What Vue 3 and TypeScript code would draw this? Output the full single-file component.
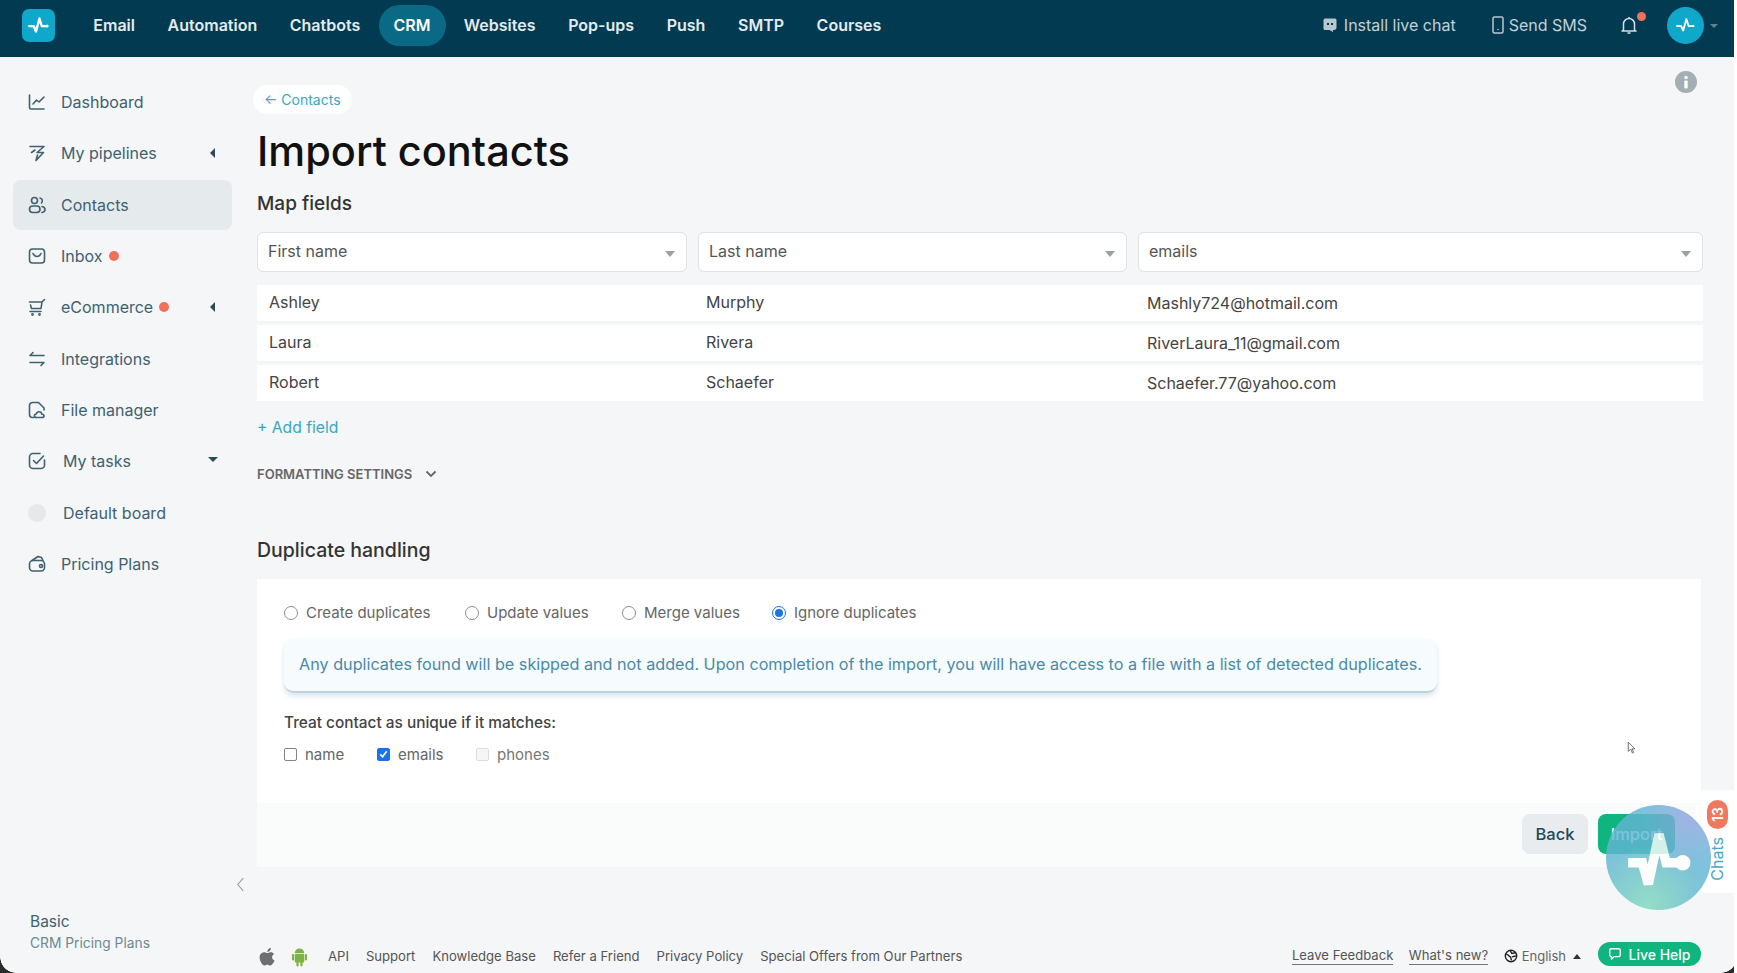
<script setup lang="ts">
interface SideItem { label: string; icon: string; dot?: boolean; caret?: 'left' | 'down'; active?: boolean; indent?: boolean }
const navs = ['Email', 'Automation', 'Chatbots', 'CRM', 'Websites', 'Pop-ups', 'Push', 'SMTP', 'Courses']
const side: SideItem[] = [
  { label: 'Dashboard', icon: 'dash' },
  { label: 'My pipelines', icon: 'pipe', caret: 'left' },
  { label: 'Contacts', icon: 'contacts', active: true },
  { label: 'Inbox', icon: 'inbox', dot: true },
  { label: 'eCommerce', icon: 'cart', dot: true, caret: 'left' },
  { label: 'Integrations', icon: 'swap' },
  { label: 'File manager', icon: 'file' },
  { label: 'My tasks', icon: 'tasks', caret: 'down', indent: true },
  { label: 'Default board', icon: 'circle', indent: true },
  { label: 'Pricing Plans', icon: 'wallet' }
]
const selects = [
  { label: 'First name', w: 430 },
  { label: 'Last name', w: 429 },
  { label: 'emails', w: 565 }
]
const rows = [
  ['Ashley', 'Murphy', 'Mashly724@hotmail.com'],
  ['Laura', 'Rivera', 'RiverLaura_11@gmail.com'],
  ['Robert', 'Schaefer', 'Schaefer.77@yahoo.com']
]
const radios = [
  { label: 'Create duplicates', on: false, w: 181 },
  { label: 'Update values', on: false, w: 157 },
  { label: 'Merge values', on: false, w: 150 },
  { label: 'Ignore duplicates', on: true, w: 160 }
]
const footLinks = ['API', 'Support', 'Knowledge Base', 'Refer a Friend', 'Privacy Policy', 'Special Offers from Our Partners']
</script>

<template>
  <div class="page">
    <header class="top">
      <div class="logo">
        <svg viewBox="0 0 24 24" width="26" height="26" fill="none" stroke="#fff" stroke-width="2.2" stroke-linejoin="round" stroke-linecap="round">
          <path d="M3 13h4l2.2 5L12.4 6l2.2 7h4" /><circle cx="19.5" cy="13" r="1.4" fill="#fff" stroke="none" />
        </svg>
      </div>
      <nav class="nav">
        <a v-for="n in navs" :key="n" class="nav-link" :class="{ on: n === 'CRM' }">{{ n }}</a>
      </nav>
      <div class="top-right">
        <span class="tool chat-tool">
          <svg viewBox="0 0 16 16" width="16" height="16"><path d="M3 1.500h10a1.500 1.500 0 0 1 1.500 1.500v7.500c0 1.500-1 2.500-2.500 2.500h-1v2L7.500 13H3a1.500 1.500 0 0 1-1.500-1.500V3A1.500 1.500 0 0 1 3 1.500z" fill="#b9c8cf" /><rect x="5" y="6" width="2" height="2" fill="#023a52" /><rect x="9" y="6" width="2" height="2" fill="#023a52" /></svg>
          Install live chat
        </span>
        <span class="tool sms-tool">
          <svg viewBox="0 0 12 18" width="12" height="18" fill="none" stroke="#b9c8cf" stroke-width="1.500"><rect x="1" y="1" width="10" height="16" rx="1.500" /><circle cx="6" cy="13.500" r=".8" fill="#b9c8cf" stroke="none" /></svg>
          Send SMS
        </span>
        <span class="bell">
          <svg viewBox="0 0 20 20" width="20" height="20" fill="none" stroke="#d5dee2" stroke-width="1.500" stroke-linejoin="round"><path d="M4.500 15V9a5.500 5.500 0 0 1 11 0v6l1.500 1H3z" /><path d="M8.500 18h3" /><path d="M10 3V2" /></svg>
          <i class="bell-dot"></i>
        </span>
        <span class="avatar">
          <svg viewBox="0 0 24 24" width="24" height="24" fill="none" stroke="#fff" stroke-width="1.800" stroke-linejoin="round" stroke-linecap="round"><path d="M3 13h4l2.200 4.500L12.400 6l2.200 7h5" /></svg>
        </span>
        <i class="avatar-caret"></i>
      </div>
    </header>

    <div class="body">
      <aside class="sidebar">
        <ul class="side-list">
          <li v-for="s in side" :key="s.label" class="side-item" :class="{ active: s.active, indent: s.indent }">
            <span class="side-icon">
              <svg v-if="s.icon !== 'circle'" viewBox="0 0 20 20" width="20" height="20" fill="none" stroke="#3f6171" stroke-width="1.600" stroke-linecap="round" stroke-linejoin="round">
                <path v-if="s.icon === 'dash'" d="M2.500 3v12.500a1.500 1.500 0 0 0 1.500 1.500h13M6 12l3.500-4 2.500 2 5-5" />
                <path v-else-if="s.icon === 'pipe'" d="M3 3.500h14L10 9.500h6.500L9 17.500l1.500-5.500M4.500 9.500 8 7" />
                <g v-else-if="s.icon === 'contacts'">
                  <circle cx="7.500" cy="5.500" r="3" /><path d="M13 3a3 3 0 0 1 1.500 5" /><rect x="2.500" y="11" width="10.500" height="6.500" rx="3.200" /><path d="M15 11.500c2 .3 3 1.600 3 3s-1 2.700-3 3" />
                </g>
                <g v-else-if="s.icon === 'inbox'">
                  <rect x="2.500" y="3" width="15" height="14" rx="3" /><path d="M6 7.500c1 2 2.500 3 4 3s3-1 4-3" />
                </g>
                <g v-else-if="s.icon === 'cart'">
                  <path d="M2.500 5h12.500l2.500-2.500M15 5l-1 6.500H4.500L3.500 8" /><path d="M3 14.500h11" /><circle cx="5.500" cy="17.500" r=".6" /><circle cx="12.500" cy="17.500" r=".6" />
                </g>
                <path v-else-if="s.icon === 'swap'" d="M6 3.500 3 6.500h14M14 16.500l3-3H3" />
                <g v-else-if="s.icon === 'file'">
                  <path d="M7 17.500H5.500a3 3 0 0 1-3-3v-9a3 3 0 0 1 3-3h6l5.500 5.500V10" /><path d="M9.500 17.500c-1.500 0-2-1-2-1.800 0-1 .8-1.700 1.700-1.700.4-1.500 1.500-2.300 2.800-2.300 1.500 0 2.700 1.100 2.800 2.500 1.200.1 2.200.9 2.200 1.800 0 1-.8 1.500-2 1.500z" />
                </g>
                <g v-else-if="s.icon === 'tasks'">
                  <path d="M17.500 9v5a3.500 3.500 0 0 1-3.500 3.500H6A3.500 3.500 0 0 1 2.500 14V6A3.500 3.500 0 0 1 6 2.500h7" /><path d="m6.500 9.500 3 3 7-7.500" />
                </g>
                <g v-else-if="s.icon === 'wallet'">
                  <path d="M5 6.500 11 2.500l3.500 1 1.500 3" /><rect x="2.500" y="6.500" width="15" height="10.500" rx="3.500" /><circle cx="14" cy="12" r="1.500" />
                </g>
              </svg>
              <i v-else class="ghost-dot"></i>
            </span>
            <span class="side-label">{{ s.label }}</span>
            <i v-if="s.dot" class="red-dot"></i>
            <i v-if="s.caret" class="caret" :class="s.caret"></i>
          </li>
        </ul>
        <div class="plan">
          <div class="plan-name">Basic</div>
          <div class="plan-sub">CRM Pricing Plans</div>
        </div>
        <svg class="collapse" viewBox="0 0 10 16" width="9" height="15" fill="none" stroke="#8f9ea5" stroke-width="1.200"><path d="M8 1 2 8l6 7" /></svg>
      </aside>

      <main class="main">
        <div class="content">
          <a class="back-pill">← Contacts</a>
          <svg class="info" viewBox="0 0 22 22" width="22" height="22"><circle cx="11" cy="11" r="11" fill="#a3afb3" /><circle cx="11" cy="6.500" r="1.800" fill="#fff" /><rect x="9.300" y="9.500" width="3.400" height="8" rx="1" fill="#fff" /></svg>
          <h1>Import contacts</h1>
          <h2 class="map-title">Map fields</h2>

          <div class="map-grid">
            <div v-for="s in selects" :key="s.label" class="select" :style="{ width: s.w + 'px' }">
              <span>{{ s.label }}</span><i class="sel-caret"></i>
            </div>
          </div>
          <div class="rows">
            <div v-for="r in rows" :key="r[0]" class="row">
              <span class="rc1">{{ r[0] }}</span><span class="rc2">{{ r[1] }}</span><span class="rc3">{{ r[2] }}</span>
            </div>
          </div>

          <a class="add-field">+ Add field</a>
          <div class="format">
            FORMATTING SETTINGS
            <svg viewBox="0 0 12 8" width="12" height="8" fill="none" stroke="#666" stroke-width="1.800"><path d="m1.500 1.500 4.500 4.500 4.500-4.500" /></svg>
          </div>

          <h2 class="dup-title">Duplicate handling</h2>
          <section class="card">
            <div class="card-top">
              <div class="radios">
                <label v-for="r in radios" :key="r.label" class="radio" :style="{ width: r.w + 'px' }">
                  <i class="radio-mark" :class="{ on: r.on }"></i>{{ r.label }}
                </label>
              </div>
              <div class="alert">Any duplicates found will be skipped and not added. Upon completion of the import, you will have access to a file with a list of detected duplicates.</div>
              <div class="unique">Treat contact as unique if it matches:</div>
              <div class="checks">
                <label class="check c-name"><i class="box"></i>name</label>
                <label class="check c-emails">
                  <i class="box on"><svg viewBox="0 0 12 12" width="12" height="12" fill="none" stroke="#fff" stroke-width="1.800"><path d="m2.500 6.500 2.500 2.500 4.500-6" /></svg></i>emails
                </label>
                <label class="check c-phones"><i class="box off"></i>phones</label>
              </div>
            </div>
            <div class="card-foot">
              <button class="btn back">Back</button>
              <button class="btn import">Import</button>
            </div>
          </section>
        </div>

        <footer class="foot">
          <svg class="apple" viewBox="0 0 18 20" width="17" height="19"><path fill="#6d6f70" d="M12.500 1c.1 1.300-.4 2.300-1 3-.7.800-1.700 1.300-2.600 1.200-.1-1.200.4-2.300 1-3 .6-.7 1.700-1.200 2.600-1.200zM16.500 14.200c-.5 1.100-.7 1.600-1.300 2.500-.9 1.300-2 2.800-3.300 2.800-1.200 0-1.500-.8-3.100-.8-1.600 0-2 .8-3.200.8-1.300 0-2.300-1.400-3.100-2.600C.3 13.500.1 9.600 1.500 7.600c1-1.400 2.500-2.200 3.900-2.200 1.500 0 2.400.8 3.600.8 1.100 0 1.800-.8 3.500-.8 1.300 0 2.600.7 3.500 1.900-3.100 1.700-2.600 6 .5 6.900z" /></svg>
          <svg class="android" viewBox="0 0 18 22" width="17" height="21"><g fill="#7cb342"><path d="M4 7.500a5 5 0 0 1 10 0z" /><rect x="4" y="8.300" width="10" height="9" rx="1" /><rect x="1" y="8.300" width="2.300" height="7" rx="1.150" /><rect x="14.700" y="8.300" width="2.300" height="7" rx="1.150" /><rect x="5.700" y="15" width="2.400" height="6.500" rx="1.200" /><rect x="9.900" y="15" width="2.400" height="6.500" rx="1.200" /></g></svg>
          <a v-for="l in footLinks" :key="l" class="foot-link">{{ l }}</a>
          <span class="foot-right">
            <a class="foot-u">Leave Feedback</a>
            <a class="foot-u">What's new?</a>
            <span class="lang">
              <svg viewBox="0 0 16 16" width="14" height="14" fill="none" stroke="#222" stroke-width="1.600"><circle cx="8" cy="8" r="6.500" /><path d="M2.500 6c3 0 3 3 5 3l1 4M7 1.800 9 5l5-1M9 9l4.500-1" /></svg>
              English
              <i class="up-caret"></i>
            </span>
            <span class="live">
              <svg viewBox="0 0 16 16" width="14" height="14" fill="none" stroke="#fff" stroke-width="1.500" stroke-linejoin="round"><path d="M2 3.500A1.500 1.500 0 0 1 3.500 2h9A1.500 1.500 0 0 1 14 3.500v6a1.500 1.500 0 0 1-1.500 1.500H7l-3 3v-3h-.5A1.500 1.500 0 0 1 2 9.500z" /></svg>
              Live Help
            </span>
          </span>
        </footer>
      </main>
    </div>

    <div class="chats-tab">
      <span class="chats-badge">13</span>
      <span class="chats-text">Chats</span>
    </div>
    <div class="fab">
      <svg viewBox="0 0 64 64" width="76" height="76" fill="none" stroke="#fff" stroke-width="8" stroke-linejoin="miter"><path d="M6 36h12l5 18 9-42 6 24h14" /><circle cx="52" cy="36" r="6.500" fill="#fff" stroke="none" /></svg>
    </div>
    <svg class="cursor" viewBox="0 0 12 16" width="10" height="14"><path d="M1.500 1v11l3-2.500 2 4.500 1.500-.7-2-4.300h3.500z" fill="#fff" stroke="#555" stroke-width="1" /></svg>
    <i class="corner bl"></i>
    <i class="corner br"></i>
    <i class="edge"></i>
  </div>
</template>

<style>
html, body { margin: 0; padding: 0; background: #f4f6f7; }
</style>

<style scoped>
* { box-sizing: border-box; }
.page { position: relative; width: 1737px; height: 973px; overflow: hidden; background: #f4f6f7; font-family: Inter, "Noto Sans", sans-serif; color: #3f6171; }

.top { height: 57px; background: #023a52; display: flex; align-items: center; padding: 0 0 7px 22px; }
.logo { width: 33px; height: 33px; border-radius: 7px; background: #0fa8cb; display: flex; align-items: center; justify-content: center; margin-right: 22px; }
.nav { display: flex; align-items: center; }
.nav-link { height: 41px; line-height: 41px; padding: 0 16.300px; font-size: 16px; font-weight: 600; color: #e4ebee; }
.nav-link.on { background: #0a6a86; border-radius: 21px; padding: 0 15px; margin: 0 2px; color: #fff; }
.top-right { margin-left: auto; display: flex; align-items: center; }
.tool { display: flex; align-items: center; font-size: 16px; color: #c3d0d5; }
.chat-tool { gap: 6px; margin-right: 36px; }
.sms-tool { gap: 5px; margin-right: 32px; }
.bell { position: relative; display: flex; margin-right: 28px; }
.bell-dot { position: absolute; top: -3px; right: -7px; width: 9px; height: 9px; border-radius: 50%; background: #f0705a; }
.avatar { width: 37px; height: 37px; border-radius: 50%; background: #0fa8cb; display: flex; align-items: center; justify-content: center; }
.avatar-caret { width: 0; height: 0; margin: 2px 19px 0 6px; border-left: 4px solid transparent; border-right: 4px solid transparent; border-top: 4px solid #5f8191; }

.body { height: 916px; display: flex; }
.sidebar { position: relative; width: 257px; flex: none; padding: 20px 0 0 13px; display: flex; flex-direction: column; }
.side-list { list-style: none; margin: 0; padding: 0; display: flex; flex-direction: column; gap: 1.340px; }
.side-item { height: 50px; width: 219px; border-radius: 8px; display: flex; align-items: center; padding-left: 14px; font-size: 16px; position: relative; }
.side-item.active { background: #e5eaec; }
.side-icon { width: 20px; height: 20px; display: flex; align-items: center; justify-content: center; margin-right: 14px; }
.side-item.indent .side-icon { margin-right: 16px; }
.side-label { white-space: nowrap; }
.ghost-dot { width: 18px; height: 18px; border-radius: 50%; background: #e6e8ea; }
.red-dot { width: 10px; height: 10px; border-radius: 50%; background: #f0705a; margin-left: 6px; }
.caret { position: absolute; left: 197px; top: 50%; width: 0; height: 0; }
.caret.left { margin-top: -5px; border-top: 5px solid transparent; border-bottom: 5px solid transparent; border-right: 5px solid #2f4a57; }
.caret.down { margin-top: -4px; margin-left: -2px; border-left: 5px solid transparent; border-right: 5px solid transparent; border-top: 5px solid #2f4a57; }
.plan { margin-top: auto; padding: 0 0 19px 17px; }
.plan-name { font-size: 15.500px; line-height: 21px; color: #3f6171; }
.plan-sub { font-size: 13.800px; line-height: 22px; color: #6f8894; }
.collapse { position: absolute; left: 236px; top: 820px; }

.main { flex: 1; display: flex; flex-direction: column; min-width: 0; }
.content { position: relative; flex: 1; padding: 28px 34px 0 0; }
.back-pill { display: inline-block; margin-left: -4px; height: 29px; line-height: 29px; padding: 0 11px; border-radius: 15px; background: #fff; font-size: 14px; color: #3aa6c0; }
.info { position: absolute; right: 40px; top: 14px; }
h1 { margin: 12px 0 0; font-size: 41.500px; line-height: 50px; font-weight: 500; color: #111; }
.map-title { margin: 15px 0 0; font-size: 19px; line-height: 26px; font-weight: 500; color: #333; }
.map-grid { margin-top: 15px; display: flex; gap: 11px; }
.select { height: 40px; flex: none; background: #fff; border: 1px solid #dfe3e5; border-radius: 6px; display: flex; align-items: center; padding: 0 10px 2px; font-size: 16px; color: #555; position: relative; }
.sel-caret { position: absolute; right: 11px; top: 18px; width: 0; height: 0; border-left: 5px solid transparent; border-right: 5px solid transparent; border-top: 6px solid #9a9fa2; }
.rows { margin-top: 13px; display: flex; flex-direction: column; gap: 4px; }
.row { height: 36px; background: #fff; display: flex; align-items: center; font-size: 16px; color: #444; }
.rc1 { width: 449px; padding-left: 12px; margin-top: -2px; }
.rc2 { width: 441px; margin-top: -2px; }
.rc3 { flex: 1; }
.add-field { display: block; margin-top: 15px; font-size: 15.700px; line-height: 24px; color: #3aa6c0; }
.format { margin-top: 25px; display: flex; align-items: center; gap: 13px; font-size: 13px; line-height: 18px; font-weight: 600; color: #666; }
.dup-title { margin: 54px 0 0; font-size: 19.500px; line-height: 26px; font-weight: 500; color: #333; }
.card { margin-top: 16px; width: 1444px; background: #fff; }
.card-top { height: 224px; padding: 24px 0 0 27px; }
.radios { display: flex; height: 19px; align-items: center; }
.radio { display: flex; align-items: center; font-size: 15px; color: #666; flex: none; white-space: nowrap; }
.radio-mark { width: 14px; height: 14px; border: 1px solid #8a8f92; border-radius: 50%; margin-right: 8px; position: relative; background: #fff; }
.radio-mark.on { border-color: #1a73e8; }
.radio-mark.on::after { content: ""; position: absolute; inset: 2px; border-radius: 50%; background: #1a73e8; }
.alert { margin-top: 17px; width: 1153px; height: 54px; line-height: 50px; padding-left: 15px; border-radius: 10px; background: #f6fbfe; border-bottom: 2px solid #bcd2e0; box-shadow: 0 3px 5px rgba(110, 150, 180, .25); font-size: 16.200px; color: #4a8aa8; white-space: nowrap; }
.unique { margin-top: 20px; font-size: 15.400px; line-height: 20px; font-weight: 500; color: #444; }
.checks { margin-top: 11px; display: flex; align-items: center; height: 20px; }
.check { display: flex; align-items: center; font-size: 15px; color: #666; }
.box { width: 13px; height: 13px; border: 1px solid #7f8487; border-radius: 2px; margin-right: 8px; background: #fff; display: flex; align-items: center; justify-content: center; }
.box.on { background: #1a73e8; border-color: #1a73e8; }
.box.off { border-color: #ddd; background: #f6f6f6; }
.c-name { width: 93px; }
.c-emails { width: 99px; }
.c-phones { color: #777; }
.card-foot { height: 64px; background: #fafbfb; display: flex; justify-content: flex-end; align-items: center; gap: 10px; padding: 0 26px 2px 0; }
.btn { height: 40px; border: 0; border-radius: 8px; font: 500 16.500px Inter, "Noto Sans", sans-serif; }
.btn.back { width: 66px; background: #e8ecee; color: #23475a; }
.btn.import { width: 77px; background: #0fb57e; color: #fff; }
.foot { height: 50px; flex: none; padding: 16px 36px 0 0; display: flex; align-items: center; font-size: 13.100px; color: #555; }
.apple { margin: 0 15px 0 2px; }
.android { margin-right: 20px; }
.foot-link { margin-right: 17px; white-space: nowrap; }
.foot-right { margin-left: auto; display: flex; align-items: center; }
.foot-u { border-bottom: 1px solid #777; line-height: 17px; margin-right: 15.500px; }
.lang { display: flex; align-items: center; gap: 4px; margin-right: 17px; color: #666; font-size: 13px; }
.up-caret { width: 0; height: 0; margin-left: 3px; border-left: 4px solid transparent; border-right: 4px solid transparent; border-bottom: 5px solid #333; }
.live { width: 103px; height: 24px; margin-top: -4px; border-radius: 12px; background: #0fb57e; color: #fff; display: flex; align-items: center; justify-content: center; gap: 6px; font-size: 14px; font-weight: 500; }

.chats-tab { position: absolute; left: 1696px; top: 790px; width: 41px; height: 103px; background: #fff; border-radius: 10px 0 0 10px; }
.chats-badge { position: absolute; left: 11px; top: 10px; width: 21px; height: 29px; border-radius: 11px; background: #f0785f; color: #fff; font-size: 14px; font-weight: 600; writing-mode: vertical-rl; transform: rotate(180deg); display: flex; align-items: center; justify-content: center; }
.chats-text { position: absolute; left: 12px; top: 47px; font-size: 16px; line-height: 18px; color: #4aa9c4; writing-mode: vertical-rl; transform: rotate(180deg); }
.fab { position: absolute; left: 1606px; top: 805px; width: 105px; height: 105px; border-radius: 50%; background: radial-gradient(circle at 80% 12%, #8ea4e0 0, rgba(142,164,224,0) 38%), radial-gradient(circle at 40% 95%, #7fd8bc 0, rgba(127,216,188,0) 50%), #62b6d4; opacity: .82; display: flex; align-items: center; justify-content: center; }
.cursor { position: absolute; left: 1627px; top: 741px; }
.corner { position: absolute; bottom: 0; width: 16px; height: 16px; }
.corner.bl { left: 0; background: radial-gradient(circle at 100% 0, transparent 15.500px, #2b2b2b 16px); }
.corner.br { right: 0; background: radial-gradient(circle at 0 0, transparent 15.500px, #2b2b2b 16px); }
.edge { position: absolute; right: 0; top: 0; bottom: 0; width: 3px; background: #fff; }
</style>
